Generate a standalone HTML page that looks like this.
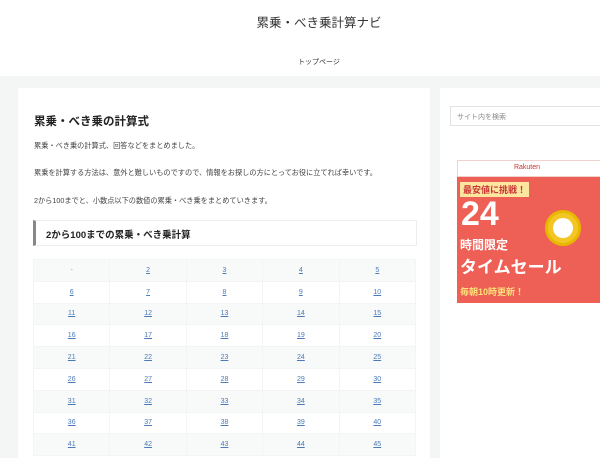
<!DOCTYPE html>
<html><head><meta charset="utf-8"><style>
*{margin:0;padding:0;box-sizing:border-box}
body{width:600px;height:450px;overflow:hidden;background:#f4f5f5;font-family:"Liberation Sans","Noto Sans CJK JP",sans-serif;color:#333;position:relative}
.hdr{position:absolute;left:0;top:0;width:600px;height:76px;background:#fff}
.title{position:absolute;top:12px;left:0;width:638px;text-align:center;font-size:12.5px;color:#333}
.nav{position:absolute;top:57px;left:0;width:638px;text-align:center;font-size:7px;color:#333}
.main{position:absolute;left:18px;top:88px;width:412px;height:370px;background:#fff}
h1{position:absolute;left:16px;top:25px;font-size:11.5px;font-weight:bold;color:#222}
.p{position:absolute;left:16px;font-size:7.2px;color:#444;white-space:nowrap}
.h2{position:absolute;left:15px;top:132px;width:384px;height:26px;border:1px solid #eee;border-left:3px solid #888;font-size:9.5px;font-weight:bold;padding:6px 0 0 10px;color:#222}
table{position:absolute;left:15px;top:171px;width:383px;border-collapse:collapse}
td{height:21.8px;width:76.6px;text-align:center;font-size:7px;color:#4a7ab8;text-decoration:underline;border:1px solid #f3f4f4}
tr:nth-child(odd) td{background:#f8f9f9}
.side{position:absolute;left:440px;top:88px;width:170px;height:370px;background:#fff}
.search{position:absolute;left:450px;top:106px;width:160px;height:20px;border:1px solid #e3e3e3;font-size:7px;color:#888;padding:5px 6px}
.ban{position:absolute;left:457px;top:160px;width:150px;height:143px;background:#ee5f55}
.bt{position:absolute;left:0;top:0;width:150px;height:17px;background:#fff;border:1px solid #f2d0cc;text-align:center;font-size:7px;color:#c33;padding-top:3px;padding-right:10px}
</style></head><body>
<div class="hdr"></div>
<div class="title">累乗・べき乗計算ナビ</div>
<div class="nav">トップページ</div>
<div class="main">
<h1>累乗・べき乗の計算式</h1>
<div class="p" style="top:53px">累乗・べき乗の計算式、回答などをまとめました。</div>
<div class="p" style="top:80px">累乗を計算する方法は、意外と難しいものですので、情報をお探しの方にとってお役に立てれば幸いです。</div>
<div class="p" style="top:108px">2から100までと、小数点以下の数値の累乗・べき乗をまとめていきます。</div>
<div class="h2">2から100までの累乗・べき乗計算</div>
<table>
<tr><td style="text-decoration:none;color:#999">-</td><td>2</td><td>3</td><td>4</td><td>5</td></tr>
<tr><td>6</td><td>7</td><td>8</td><td>9</td><td>10</td></tr>
<tr><td>11</td><td>12</td><td>13</td><td>14</td><td>15</td></tr>
<tr><td>16</td><td>17</td><td>18</td><td>19</td><td>20</td></tr>
<tr><td>21</td><td>22</td><td>23</td><td>24</td><td>25</td></tr>
<tr><td>26</td><td>27</td><td>28</td><td>29</td><td>30</td></tr>
<tr><td>31</td><td>32</td><td>33</td><td>34</td><td>35</td></tr>
<tr><td>36</td><td>37</td><td>38</td><td>39</td><td>40</td></tr>
<tr><td>41</td><td>42</td><td>43</td><td>44</td><td>45</td></tr>
</table>
</div>
<div class="side"></div>
<div class="search">サイト内を検索</div>
<div class="ban">
<div class="bt">Rakuten</div>
<div style="position:absolute;left:3px;top:22px;background:#fbe6a0;color:#c33;font-size:9px;font-weight:bold;padding:1px 3px">最安値に挑戦！</div>
<div style="position:absolute;left:4px;top:34px;color:#fff;font-size:34px;font-weight:bold;line-height:40px">24</div>
<div style="position:absolute;left:3px;top:76px;color:#fff;font-size:12px;font-weight:bold">時間限定</div>
<div style="position:absolute;left:3px;top:93px;color:#fff;font-size:17px;font-weight:bold;white-space:nowrap">タイムセール</div>
<div style="position:absolute;left:3px;top:125px;color:#fde07a;font-size:9px;font-weight:bold">毎朝10時更新！</div>
<div style="position:absolute;left:88px;top:50px;width:36px;height:36px;border-radius:50%;background:#f3c623;border:3px solid #e8b800"><div style="position:absolute;left:5px;top:5px;width:20px;height:20px;border-radius:50%;background:#fff"></div></div>
</div>
</body></html>
